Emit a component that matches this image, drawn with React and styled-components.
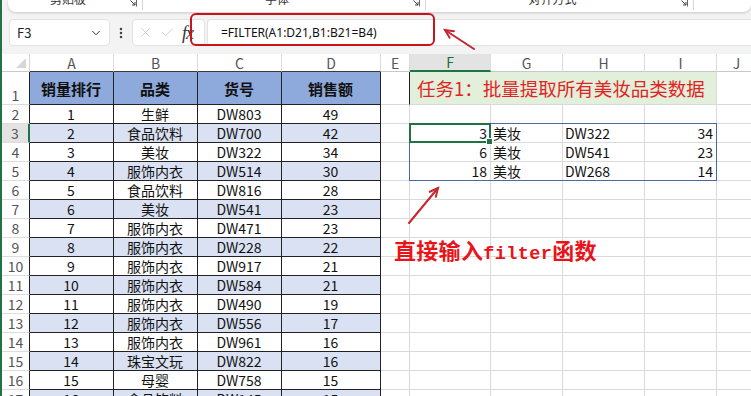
import React from "react";
import styled, { createGlobalStyle } from "styled-components";
import { ChevronDown, X, Check, EllipsisVertical } from "lucide-react";

const GlobalStyle = createGlobalStyle`
  html, body {
    margin: 0;
    padding: 0;
    background: #f3f3f3;
    overflow: hidden;
  }
  body {
    font-family: "Noto Sans CJK SC", "Noto Sans", sans-serif;
  }
`;

const Window = styled.div`
  position: relative;
  width: 751px;
  height: 396px;
  overflow: hidden;
  box-sizing: border-box;
  border-left: 2px solid #217346;
  display: flex;
  flex-direction: column;
`;

// ribbon bottom edge, group labels cut by the window top
const Ribbon = styled.div`
  flex-shrink: 0;
  height: 12px;
  margin-left: 6px;
  background: #fff;
  border-radius: 0 0 8px 8px;
  box-shadow: 0 1px 3px rgba(0, 0, 0, 0.18);
  display: flex;
  overflow: hidden;
`;
const RibbonGroup = styled.div`
  position: relative;
  flex: 0 0 ${({ $w }) => $w}px;
  height: 10px;
  border-right: 1px solid #d6d6d6;
  box-sizing: border-box;
`;
const RibbonLabel = styled.div`
  position: absolute;
  left: 0;
  right: 14px;
  top: -8px;
  text-align: center;
  font-size: 12px;
  line-height: 14px;
  color: #333;
`;
const Launcher = styled.svg`
  position: absolute;
  right: 5px;
  top: -1px;
`;

const FormulaRow = styled.div`
  flex-shrink: 0;
  display: flex;
  height: 27px;
  margin-top: 7px;
  padding-left: 7px;
`;
const NameBox = styled.div`
  width: 101px;
  box-sizing: border-box;
  background: #fff;
  border: 1px solid #e2e2e2;
  border-radius: 4px;
  display: flex;
  align-items: center;
  justify-content: space-between;
  padding: 0 6px 0 7px;
  font-size: 13px;
  color: #222;
`;
const DotsSlot = styled.div`
  width: 22px;
  display: flex;
  align-items: center;
  justify-content: center;
  color: #444;
`;
const ActionBox = styled.div`
  width: 73px;
  box-sizing: border-box;
  background: #fff;
  border: 1px solid #e2e2e2;
  border-radius: 4px;
  display: flex;
  align-items: center;
  padding-left: 5px;
  gap: 7px;
  color: #c4c4c4;
`;
const Fx = styled.span`
  margin-left: 0;
  font-family: "Liberation Serif", serif;
  font-style: italic;
  font-size: 18px;
  line-height: 18px;
  color: #333;
  letter-spacing: -1px;
`;
const FormulaInput = styled.div`
  flex: 1;
  margin-left: 2px;
  background: #fff;
  border: 1px solid #e2e2e2;
  border-right: none;
  border-radius: 4px 0 0 4px;
  display: flex;
  align-items: center;
  padding-left: 13px;
  font-family: "Noto Sans", sans-serif;
  font-size: 12px;
  color: #111;
`;

const Sheet = styled.div`
  margin-top: 8px;
  display: grid;
  grid-template-columns: 28px 84px 84px 84px 99px 29px 81px 72px 82px 72px 40px;
  grid-template-rows: 18px 33px repeat(17, 19px);
  background: #fff;
`;
const Corner = styled.div`
  position: relative;
  grid-row: 1;
  grid-column: 1;
  background: #fff;
  border-right: 1px solid #d4d4d4;
  border-bottom: 1px solid #c8c8c8;
  &::after {
    content: "";
    position: absolute;
    right: 3px;
    bottom: 3px;
    border-style: solid;
    border-width: 0 0 10px 10px;
    border-color: transparent transparent #d7d7d7 transparent;
  }
`;
const ColHead = styled.div`
  grid-row: 1;
  grid-column: ${({ $c }) => $c};
  box-sizing: border-box;
  display: flex;
  align-items: center;
  justify-content: center;
  font-size: 14px;
  color: ${({ $sel }) => ($sel ? "#1e6b41" : "#555")};
  background: ${({ $sel }) => ($sel ? "#e3e3e3" : "#fff")};
  border-right: 1px solid #dcdcdc;
  border-bottom: ${({ $sel, $dark }) =>
    $sel ? "2px solid #217346" : `1px solid ${$dark ? "#3a3a3a" : "#c8c8c8"}`};
`;
const RowHead = styled.div`
  grid-row: ${({ $r }) => $r + 1};
  grid-column: 1;
  box-sizing: border-box;
  display: flex;
  align-items: flex-end;
  justify-content: center;
  font-size: 14px;
  line-height: 18px;
  color: #555;
  background: ${({ $sel }) => ($sel ? "#e3e3e3" : "#fff")};
  border-bottom: 1px solid #dcdcdc;
  border-right: ${({ $sel, $dark }) =>
    $sel ? "2px solid #217346" : `1px solid ${$dark ? "#222" : "#d4d4d4"}`};
`;
const Cell = styled.div`
  grid-row: ${({ $r }) => $r + 1};
  grid-column: ${({ $c, $span }) => `${$c} / span ${$span || 1}`};
  box-sizing: border-box;
  display: flex;
  align-items: center;
  justify-content: ${({ $align }) => $align || "center"};
  padding: 0 3px 0 2px;
  white-space: nowrap;
  overflow: hidden;
  font-size: ${({ $bold }) => ($bold ? "15px" : "14px")};
  font-weight: ${({ $bold }) => ($bold ? 700 : 400)};
  color: #111;
  background: ${({ $fill }) => $fill || "#fff"};
  border-right: 1px solid ${({ $rb }) => $rb || "#dadada"};
  border-bottom: 1px solid ${({ $bb }) => $bb || "#dadada"};
`;
const TaskCell = styled(Cell)`
  font-size: 18.5px;
  color: #e02424;
  padding-left: 7px;
`;
const SpillFrame = styled.div`
  grid-row: 4 / 7;
  grid-column: 7 / 11;
  margin: -1px 0 0 -1px;
  border: 1px solid #4a68a6;
  pointer-events: none;
`;
const Selection = styled.div`
  position: relative;
  grid-row: 4;
  grid-column: 7;
  margin: -1px 0 0 -1px;
  border: 2px solid #217346;
  pointer-events: none;
`;
const Handle = styled.div`
  position: absolute;
  right: -4px;
  bottom: -4px;
  width: 5px;
  height: 5px;
  background: #217346;
  border: 1px solid #fff;
`;

const RedFrame = styled.div`
  position: absolute;
  left: 188px;
  top: 13px;
  width: 245px;
  height: 33px;
  box-sizing: border-box;
  border: 2.5px solid #c8151c;
  border-radius: 6px;
`;
const Arrow = styled.svg`
  position: absolute;
  left: 0;
  top: 0;
  overflow: visible;
`;
const Note = styled.div`
  position: absolute;
  left: 392px;
  top: 233px;
  font-size: 22px;
  font-weight: 700;
  color: #e8141a;
  white-space: nowrap;
  letter-spacing: 0.3px;
  span {
    font-family: "Liberation Mono", monospace;
    font-size: 18.5px;
    letter-spacing: 0.4px;
  }
`;

const COLS = ["A", "B", "C", "D", "E", "F", "G", "H", "I", "J"];
const HEAD = ["销量排行", "品类", "货号", "销售额"];
const DATA = [
  [1, "生鲜", "DW803", 49],
  [2, "食品饮料", "DW700", 42],
  [3, "美妆", "DW322", 34],
  [4, "服饰内衣", "DW514", 30],
  [5, "食品饮料", "DW816", 28],
  [6, "美妆", "DW541", 23],
  [7, "服饰内衣", "DW471", 23],
  [8, "服饰内衣", "DW228", 22],
  [9, "服饰内衣", "DW917", 21],
  [10, "服饰内衣", "DW584", 21],
  [11, "服饰内衣", "DW490", 19],
  [12, "服饰内衣", "DW556", 17],
  [13, "服饰内衣", "DW961", 16],
  [14, "珠宝文玩", "DW822", 16],
  [15, "母婴", "DW758", 15],
  [16, "食品饮料", "DW145", 15],
];
// FILTER spill result in F3:I5
const RESULT = {
  3: [3, "美妆", "DW322", 34],
  4: [6, "美妆", "DW541", 23],
  5: [18, "美妆", "DW268", 14],
};
const RESULT_ALIGN = ["flex-end", "flex-start", "flex-start", "flex-end"];

const LauncherIcon = () => (
  <Launcher width="8" height="8" viewBox="0 0 8 8">
    <path d="M0.5 0.5H7.5V7.5" fill="none" stroke="#666" strokeWidth="1" />
    <path d="M1.5 1.5L6 6M6 3V6H3" fill="none" stroke="#444" strokeWidth="1" />
  </Launcher>
);

const TopRibbon = () => (
  <Ribbon>
    <RibbonGroup $w={135}>
      <RibbonLabel>剪贴板</RibbonLabel>
      <LauncherIcon />
    </RibbonGroup>
    <RibbonGroup $w={283}>
      <RibbonLabel>字体</RibbonLabel>
      <LauncherIcon />
    </RibbonGroup>
    <RibbonGroup $w={268}>
      <RibbonLabel>对齐方式</RibbonLabel>
      <LauncherIcon />
    </RibbonGroup>
  </Ribbon>
);

const FormulaBar = () => (
  <FormulaRow>
    <NameBox>
      F3
      <ChevronDown size={14} color="#333" strokeWidth={1.6} />
    </NameBox>
    <DotsSlot>
      <EllipsisVertical size={14} strokeWidth={2.4} />
    </DotsSlot>
    <ActionBox>
      <X size={15} strokeWidth={1.3} />
      <Check size={15} strokeWidth={1.3} />
      <Fx>fx</Fx>
    </ActionBox>
    <FormulaInput>=FILTER(A1:D21,B1:B21=B4)</FormulaInput>
  </FormulaRow>
);

const SheetRow = ({ r }) => {
  const rec = DATA[r - 2];
  const fill = r % 2 === 1 ? "#d9e1f2" : "#fff";
  const res = RESULT[r];
  return (
    <>
      <RowHead $r={r} $dark $sel={r === 3}>
        {r}
      </RowHead>
      {rec.map((v, i) => (
        <Cell key={`t${i}`} $r={r} $c={i + 2} $fill={fill} $rb="#222" $bb="#222">
          {v}
        </Cell>
      ))}
      <Cell $r={r} $c={6} />
      {RESULT_ALIGN.map((a, i) => (
        <Cell key={`f${i}`} $r={r} $c={i + 7} $align={a}>
          {res ? res[i] : ""}
        </Cell>
      ))}
      <Cell $r={r} $c={11} />
    </>
  );
};

const SheetGrid = () => (
  <Sheet>
    <Corner />
    {COLS.map((c, i) => (
      <ColHead key={c} $c={i + 2} $sel={c === "F"} $dark={i < 4}>
        {c}
      </ColHead>
    ))}

    <RowHead $r={1} $dark>
      1
    </RowHead>
    {HEAD.map((h, i) => (
      <Cell key={h} $r={1} $c={i + 2} $bold $fill="#8ea9db" $rb="#222" $bb="#222">
        {h}
      </Cell>
    ))}
    <Cell $r={1} $c={6} $rb="#222" />
    <TaskCell $r={1} $c={7} $span={4} $fill="#e2efda" $align="flex-start">
      任务1：批量提取所有美妆品类数据
    </TaskCell>
    <Cell $r={1} $c={11} />

    {DATA.map((_, idx) => (
      <SheetRow key={idx} r={idx + 2} />
    ))}

    <SpillFrame />
    <Selection>
      <Handle />
    </Selection>
  </Sheet>
);

const ArrowHeadLine = ({ x1, y1, x2, y2, color }) => {
  const ang = Math.atan2(y2 - y1, x2 - x1);
  const len = 9;
  const w = 0.45;
  const p1 = [x2 - len * Math.cos(ang - w), y2 - len * Math.sin(ang - w)];
  const p2 = [x2 - len * Math.cos(ang + w), y2 - len * Math.sin(ang + w)];
  return (
    <g stroke={color} strokeWidth="2" strokeLinecap="round" fill="none">
      <line x1={x1} y1={y1} x2={x2} y2={y2} />
      <polyline points={`${p1.join(",")} ${x2},${y2} ${p2.join(",")}`} />
    </g>
  );
};

export default function App() {
  return (
    <>
      <GlobalStyle />
      <Window>
        <TopRibbon />
        <FormulaBar />
        <SheetGrid />

        <RedFrame />
        <Arrow width="1" height="1">
          <ArrowHeadLine x1={472} y1={49} x2={443} y2={30} color="#c4282e" />
          <ArrowHeadLine x1={407} y1={223} x2={436} y2={188} color="#c4282e" />
        </Arrow>
        <Note>
          直接输入<span>filter</span>函数
        </Note>
      </Window>
    </>
  );
}
